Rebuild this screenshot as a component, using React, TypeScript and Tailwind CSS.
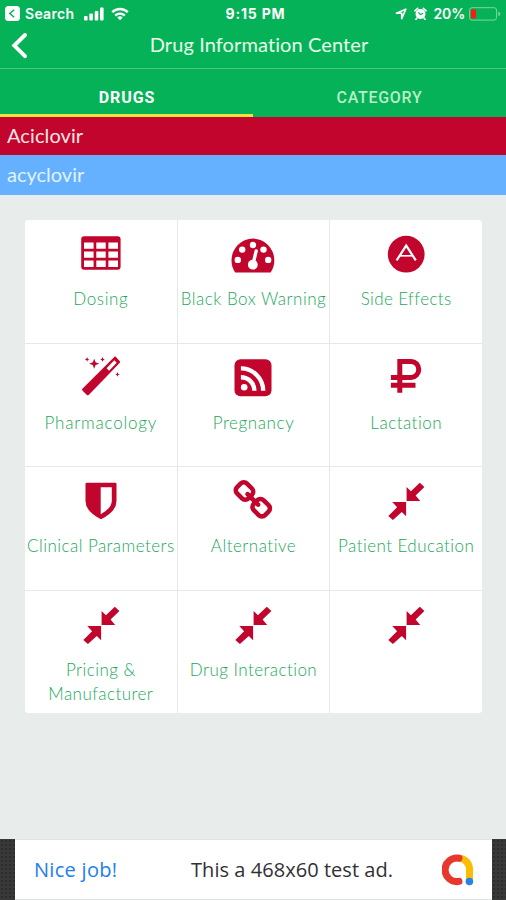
import type { ReactNode } from 'react';

interface Tile {
  label: string;
  icon: ReactNode;
  tracking: string;
}

const Compress = () => (
  <g>
    <path d="M22.6 22.1V7.9l4.3 4.3 8.9-8.4 4.6 4.2-8.8 8.6 4.6 5.5z" />
    <path d="M22.1 23V37.2l-4.3-4.3-8.9 8.2-4.6-4.2 8.8-8.6-4.8-5.3z" />
  </g>
);

const Dosing = () => (
  <path
    fillRule="evenodd"
    d="M5.2 4.2h33.4a3 3 0 0 1 3 3v27.6a3 3 0 0 1-3 3H5.2a3 3 0 0 1-3-3V7.2a3 3 0 0 1 3-3zM5 10.5v6.3h9.6v-6.3zM17.3 10.5v6.3h9.4v-6.3zM29.4 10.5v6.3h9.6v-6.3zM5 19.4v6.3h9.6v-6.3zM17.3 19.4v6.3h9.4v-6.3zM29.4 19.4v6.3h9.6v-6.3zM5 28.4v6.5h9.6v-6.5zM17.3 28.4v6.5h9.4v-6.5zM29.4 28.4v6.5h9.6v-6.5z"
  />
);

const Gauge = () => (
  <g>
    <path d="M4.2 40.6C1.8 36.9.5 32.9.5 28.4a21.4 21.8 0 0 1 42.8 0c0 4.5-1.3 8.5-3.7 12.2z" />
    <g fill="#fff">
      <circle cx="6.8" cy="27.9" r="3.2" />
      <circle cx="11.2" cy="17.6" r="3.2" />
      <circle cx="22" cy="13" r="3.2" />
      <circle cx="32.5" cy="17.6" r="3.2" />
      <circle cx="37.2" cy="27.9" r="3.2" />
      <circle cx="21.8" cy="32.7" r="4.9" />
    </g>
    <path d="M22.2 31.4l3-12.5" stroke="#fff" strokeWidth="3.4" strokeLinecap="round" />
  </g>
);

const LetterBadge = () => (
  <g>
    <circle cx="22.2" cy="22.2" r="18.4" />
    <path d="M12.6 28.4l9.6-14.8 9.6 14.8" fill="none" stroke="#fff" strokeWidth="2.2" />
    <path d="M16 23.8h12.4" stroke="#fff" strokeWidth="1.6" />
  </g>
);

const Wand = () => (
  <g>
    <path
      fillRule="evenodd"
      d="M35.5.7q.7-.5 1.3.1l4 4.4q.6.7 0 1.5L9.7 38.9q-.9.8-1.8 0l-4.5-4.5q-.7-.8 0-1.6zM35.3 4.3l-7.7 7.9 2.5 2.5 7.6-7.9z"
    />
    <path d="M15.2 2.8l1.4 3.5 3.6 1.4-3.6 1.4-1.4 3.6-1.4-3.6-3.6-1.4 3.6-1.4zM8.1 1.1l.7 1.6 1.6.7-1.6.7-.7 1.6-.7-1.6-1.6-.7 1.6-.7zM23.5 1.1l.7 1.7 1.6.7-1.6.7-.7 1.6-.7-1.6-1.6-.7 1.6-.7zM38.5 16l.7 1.7 1.6.7-1.6.7-.7 1.6-.7-1.6-1.6-.7 1.6-.7z" />
  </g>
);

const Feed = () => (
  <g>
    <rect x="3.5" y="3.2" width="37" height="37" rx="6" />
    <circle cx="13.2" cy="31.2" r="3.3" fill="#fff" />
    <path d="M9.9 12.4A22.3 22.3 0 0 1 32.2 34.7M9.9 21.2A13.5 13.5 0 0 1 23.4 34.7" fill="none" stroke="#fff" strokeWidth="4.4" />
  </g>
);

const Ruble = () => (
  <path d="M15.8 36.8V5.5h11.4a7.5 7.9 0 0 1 0 15.9H6.9M6.9 29.3h24.6" fill="none" stroke="currentColor" strokeWidth="5" />
);

const Shield = () => (
  <path
    fillRule="evenodd"
    d="M7.6 3.7h28.8q1.1 0 1.1 1.1V22q0 10.5-15.5 18.2Q6.5 32.5 6.5 22V4.8q0-1.1 1.1-1.1zM21.7 8.3v27Q32.8 29 32.8 22V8.3z"
  />
);

const Chain = () => (
  <path
    transform="translate(.6 .6) scale(.0237)"
    d="M1520 1216q0-40-28-68l-208-208q-28-28-68-28-42 0-72 32 3 3 19 18.5t21.5 21.5 15 19 13 25.5 3.5 27.5q0 40-28 68t-68 28q-15 0-27.5-3.5t-25.5-13-19-15-21.5-21.5-18.5-19q-33 31-33 73 0 40 28 68l206 207q27 27 68 27 40 0 68-26l147-146q28-28 28-67zm-703-705q0-40-28-68l-206-207q-28-28-68-28-39 0-68 27l-147 146q-28 28-28 67 0 40 28 68l208 208q27 27 68 27 42 0 72-31-3-3-19-18.5t-21.5-21.5-15-19-13-25.5-3.5-27.5q0-40 28-68t68-28q15 0 27.5 3.5t25.5 13 19 15 21.5 21.5 18.5 19q33-31 33-73zm895 705q0 120-85 203l-147 146q-83 83-203 83-121 0-204-85l-206-207q-83-83-83-203 0-123 88-209l-88-88q-86 88-208 88-120 0-204-84l-208-208q-84-84-84-204t85-203l147-146q83-83 203-83 121 0 204 85l206 207q83 83 83 203 0 123-88 209l88 88q86-88 208-88 120 0 204 84l208 208q84 84 84 204z"
  />
);

const TILES: Tile[] = [
  { label: 'Dosing', icon: <Dosing />, tracking: 'tracking-[0.6px]' },
  { label: 'Black Box Warning', icon: <Gauge />, tracking: 'tracking-[0.5px]' },
  { label: 'Side Effects', icon: <LetterBadge />, tracking: 'tracking-[0.4px]' },
  { label: 'Pharmacology', icon: <Wand />, tracking: 'tracking-[0.8px]' },
  { label: 'Pregnancy', icon: <Feed />, tracking: 'tracking-[0.6px]' },
  { label: 'Lactation', icon: <Ruble />, tracking: 'tracking-[0.5px]' },
  { label: 'Clinical Parameters', icon: <Shield />, tracking: 'tracking-[0.45px]' },
  { label: 'Alternative', icon: <Chain />, tracking: 'tracking-[0.5px]' },
  { label: 'Patient Education', icon: <Compress />, tracking: 'tracking-[0.45px]' },
  { label: 'Pricing & Manufacturer', icon: <Compress />, tracking: 'tracking-[0.45px]' },
  { label: 'Drug Interaction', icon: <Compress />, tracking: 'tracking-[0.45px]' },
  { label: '', icon: <Compress />, tracking: 'tracking-normal' },
];

const StatusBar = () => (
  <div className="grid h-[27px] grid-cols-[1fr_auto_1fr] items-center px-[5px] font-['Inter'] text-[14px] text-white">
    <div className="flex items-center">
      <svg width="15" height="15" viewBox="0 0 15 15">
        <rect width="15" height="15" rx="3.5" fill="#fff" />
        <path d="M9.2 3.8L4.8 7.5l4.4 3.7" fill="none" stroke="#06b257" strokeWidth="1.5" />
      </svg>
      <span className="ml-[5px] font-semibold tracking-[0.3px]">Search</span>
      <svg className="ml-[10px]" width="20" height="14" viewBox="0 0 20 14" fill="#fff">
        <rect y="9" width="3.6" height="4.5" rx="1" />
        <rect x="5.3" y="6.5" width="3.6" height="7" rx="1" />
        <rect x="10.7" y="4" width="3.6" height="9.5" rx="1" />
        <rect x="16" y="0.5" width="3.6" height="13" rx="1" />
      </svg>
      <svg className="ml-[7px]" width="18" height="14" viewBox="0 0 18 14" fill="none" stroke="#fff" strokeWidth="2.4">
        <path d="M1.2 5.2a11.2 11.2 0 0 1 15.6 0M4.2 8.6a6.9 6.9 0 0 1 9.6 0" />
        <path d="M9 13.2l-2.7-2.7a3.9 3.9 0 0 1 5.4 0z" fill="#fff" stroke="none" />
      </svg>
    </div>
    <span className="pl-[5px] font-bold tracking-[0.8px]">9:15 PM</span>
    <div className="flex items-center justify-end">
      <svg width="12" height="12" viewBox="0 0 12 12">
        <path d="M10.8 1.2L6.7 10.6V5.3H1.4z" fill="none" stroke="#fff" strokeWidth="1.6" strokeLinejoin="round" />
      </svg>
      <svg className="ml-[7px]" width="13" height="13" viewBox="0 0 13 13">
        <circle cx="6.5" cy="7" r="5" fill="#fff" />
        <path d="M.9 3.8L3.7 1.3M12.1 3.8L9.3 1.3M3 11l-1.2 1.5M10 11l1.2 1.5" stroke="#fff" strokeWidth="1.6" strokeLinecap="round" />
        <path d="M4.2 5.4l2.4 2.1 2.6-1.2" fill="none" stroke="#06b257" strokeWidth="1.1" />
      </svg>
      <span className="ml-[7px] font-semibold tracking-[-0.2px]">20%</span>
      <svg className="ml-[4px]" width="32" height="14" viewBox="0 0 32 14">
        <rect x=".6" y=".7" width="27" height="12.4" rx="2.5" fill="none" stroke="#7fd79d" strokeWidth="1" />
        <rect x="2" y="2.3" width="5" height="9.2" rx="1" fill="#fb1d14" />
        <path d="M29.3 4.8q2 .6 2 2.2t-2 2.2z" fill="#7fd79d" />
      </svg>
    </div>
  </div>
);

const AdBanner = () => (
  <div className="flex h-[61px] bg-[#393939] bg-[radial-gradient(#2c2c2c_1px,transparent_1px)] bg-[length:4px_4px] pl-[15px] pr-[14px]">
    <div className="flex flex-1 items-center border-y border-[#dfe3e2] bg-white pl-[19px] pr-[18px]">
      <span className="w-[157px] whitespace-nowrap font-['Open_Sans'] text-[20px] font-medium tracking-[0.3px] text-[#2080ee]">Nice job!</span>
      <span className="whitespace-nowrap font-['Open_Sans'] text-[20px] tracking-[0.05px] text-[#303134]">This a 468x60 test ad.</span>
      <svg className="ml-auto" width="32" height="32" viewBox="0 0 32 32" fill="none" strokeLinecap="round" strokeWidth="7">
        <path d="M16.5 4.2c6.5 0 11 5 11 11.5v10" stroke="#fbbc04" />
        <path d="M17 4.2a11.8 11.8 0 1 0 0 23.2" stroke="#e8372c" />
        <circle cx="27.4" cy="27.5" r="3.8" fill="#2684e8" />
      </svg>
    </div>
  </div>
);

export default function App() {
  return (
    <div className="flex h-[900px] w-[506px] flex-col overflow-hidden bg-[#e8eceb] font-['Lato',sans-serif]">
      <header className="bg-[#06b257] text-white">
        <StatusBar />
        <div className="grid h-[42px] grid-cols-[60px_1fr_48px] items-center border-b border-[#55bf80]">
          <svg className="mb-[4px] ml-[10px]" width="18" height="27" viewBox="0 0 18 27">
            <path d="M15 3L4.3 13.6 15 24.1" fill="none" stroke="#fff" strokeWidth="4" strokeLinecap="round" />
          </svg>
          <h1 className="pb-[7px] text-center text-[20px] tracking-[0.1px] text-[#e5ffe9]">Drug Information Center</h1>
        </div>
        <nav className="grid h-12 grid-cols-2 font-['Roboto'] text-[16px] font-medium">
          <button className="border-b-[3px] border-[#eee23c] pl-px pt-[13px] font-bold tracking-[0.9px]">DRUGS</button>
          <button className="pb-[3px] pt-[13px] tracking-[0.7px] text-[#b9edc8]">CATEGORY</button>
        </nav>
      </header>

      <div className="flex h-[38px] items-center bg-[#c1052d] pb-[2px] pl-[7px] text-[20px] tracking-[0.1px] text-[#ffe4e4]">Aciclovir</div>
      <div className="flex h-10 items-center bg-[#65b1ff] pb-[2px] pl-[7px] text-[20px] text-[#e1f3ff]">acyclovir</div>

      <main className="mx-[25px] mt-[25px] grid h-[493px] w-[457px] grid-cols-3 grid-rows-4 gap-px overflow-hidden rounded-[3px] bg-[#e6e9e8]">
        {TILES.map((tile, i) => (
          <div key={i} className="flex flex-col items-center bg-white pt-3 text-[#c1052d]">
            <svg width="44" height="44" viewBox="0 0 44 44" fill="currentColor">
              {tile.icon}
            </svg>
            <p className={`mt-[11px] w-[152px] text-center text-[17px] font-light leading-6 text-[#22a75c] ${tile.tracking}`}>
              {tile.label}
            </p>
          </div>
        ))}
      </main>

      <div className="mt-auto">
        <AdBanner />
      </div>
    </div>
  );
}
